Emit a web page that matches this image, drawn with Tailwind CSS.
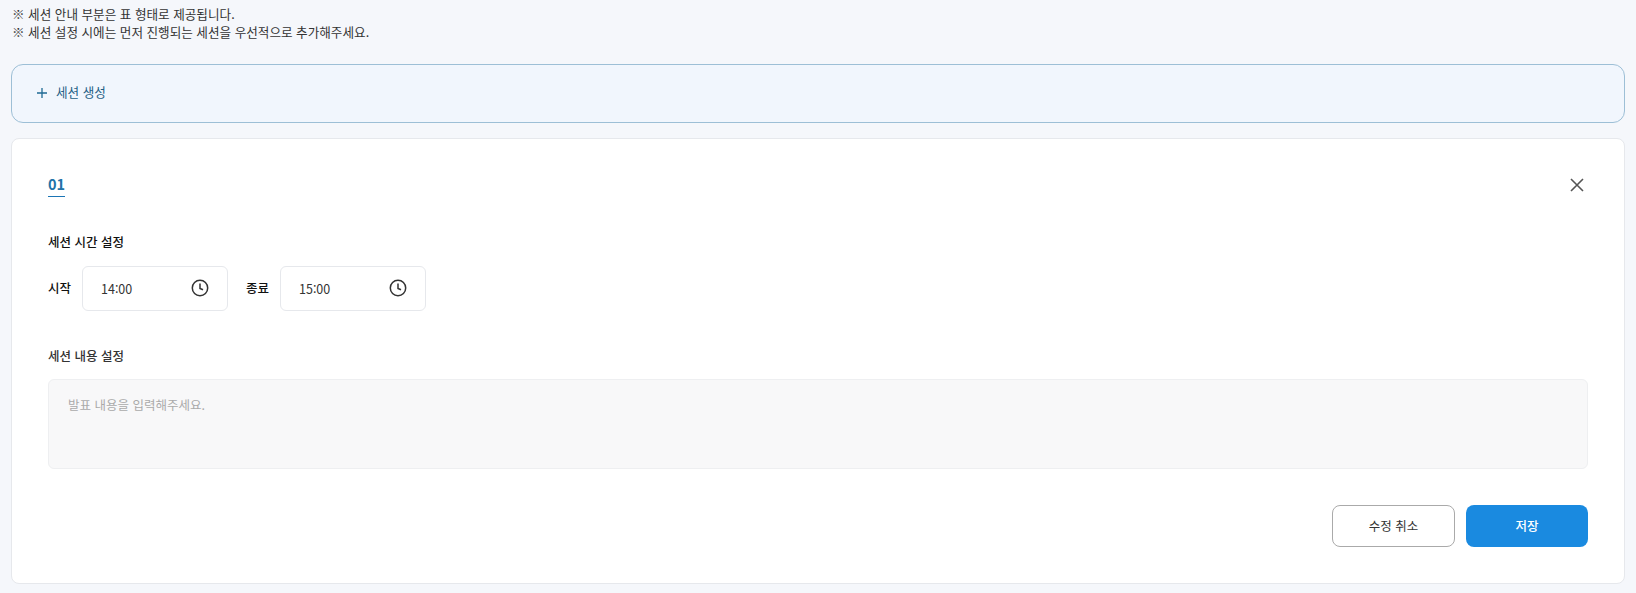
<!DOCTYPE html>
<html lang="ko">
<head>
    <meta charset="UTF-8">
    <meta name="viewport" content="width=device-width, initial-scale=1.0">
    <title>세션 설정</title>
    <script src="https://cdn.jsdelivr.net/npm/@tailwindcss/browser@4"></script>
</head>
<body class="bg-[#f5f7fb] h-[593px] overflow-hidden font-['Noto_Sans_CJK_KR','Noto_Sans',sans-serif] text-[#222]">
    <div class="px-[11px] pt-[5px]">
        <div class="pl-[1px] text-[12.6px] leading-[18px] text-[#333]">
            <p>※ 세션 안내 부분은 표 형태로 제공됩니다.</p>
            <p>※ 세션 설정 시에는 먼저 진행되는 세션을 우선적으로 추가해주세요.</p>
        </div>

        <button class="mt-[23px] w-full h-[59px] flex items-center gap-[9px] pl-[25px] pb-[2px] bg-[#f1f6fd] border border-[#9dbfd6] rounded-[12px] text-[12.6px] text-[#1f5f85]">
            <svg class="w-[10px] h-[10px]" viewBox="0 0 10 10" fill="none" stroke="#1f6a94" stroke-width="1.3"><path d="M5 0v10M0 5h10"/></svg>
            <span>세션 생성</span>
        </button>

        <div class="mt-[15px] h-[446px] bg-white border border-[#e6e8ec] rounded-[8px] px-[36px] pt-[35px]">
            <div class="flex items-start justify-between">
                <span class="border-b border-[#1b75b5] h-[23px] text-[14.5px] leading-[20px] font-semibold text-[#2273a8]">01</span>
                <svg class="w-[14px] h-[14px] mr-[4px] mt-[4px]" viewBox="0 0 14 14" fill="none" stroke="#555" stroke-width="1.6"><path d="M1 1l12 12M13 1L1 13"/></svg>
            </div>

            <h3 class="mt-[36px] text-[12.5px] leading-[18px] font-medium text-[#111]">세션 시간 설정</h3>
            <div class="mt-[15px] flex items-center text-[12.5px]">
                <span class="w-[34px] font-medium text-[#111]">시작</span>
                <div class="w-[146px] h-[45px] flex items-center justify-between pl-[18px] pr-[18px] border border-[#e6e8ec] rounded-[6px] text-[12.5px] text-[#333]">
                    <span class="mt-[1px]">14:00</span>
                    <svg class="w-[18px] h-[18px] mb-[1px]" viewBox="0 0 18 18" fill="none" stroke="#333" stroke-width="1.5"><circle cx="9" cy="9" r="7.7"/><path d="M9 4.6V9.4l3 1.4"/></svg>
                </div>
                <span class="ml-[18px] w-[34px] font-medium text-[#111]">종료</span>
                <div class="w-[146px] h-[45px] flex items-center justify-between pl-[18px] pr-[18px] border border-[#e6e8ec] rounded-[6px] text-[12.5px] text-[#333]">
                    <span class="mt-[1px]">15:00</span>
                    <svg class="w-[18px] h-[18px] mb-[1px]" viewBox="0 0 18 18" fill="none" stroke="#333" stroke-width="1.5"><circle cx="9" cy="9" r="7.7"/><path d="M9 4.6V9.4l3 1.4"/></svg>
                </div>
            </div>

            <h3 class="mt-[36px] text-[12.5px] leading-[18px] font-medium text-[#333]">세션 내용 설정</h3>
            <div class="mt-[14px] h-[90px] px-[19px] py-[15px] bg-[#f8f8f9] border border-[#eeeff1] rounded-[6px] text-[12.5px] leading-[20px] text-[#aaa]">발표 내용을 입력해주세요.</div>

            <div class="mt-[36px] flex justify-end gap-[11px]">
                <button class="w-[123px] h-[42px] bg-white border border-[#aaa] rounded-[8px] text-[12.5px] text-[#333]">수정 취소</button>
                <button class="w-[122px] h-[42px] bg-[#1a8ae0] rounded-[8px] text-[12.5px] font-medium text-white">저장</button>
            </div>
        </div>
    </div>
</body>
</html>
